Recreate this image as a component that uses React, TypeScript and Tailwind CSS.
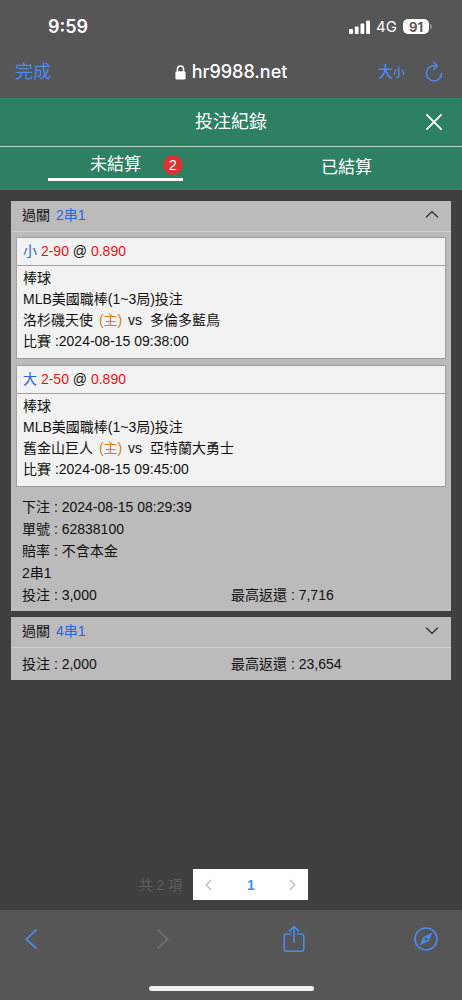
import React, { useState } from 'react';

interface Leg {
  pick: string;
  line: string;
  odds: string;
  home: string;
  away: string;
  time: string;
}

const legs: Leg[] = [
  { pick: '小', line: '2-90', odds: '0.890', home: '洛杉磯天使', away: '多倫多藍鳥', time: '2024-08-15 09:38:00' },
  { pick: '大', line: '2-50', odds: '0.890', home: '舊金山巨人', away: '亞特蘭大勇士', time: '2024-08-15 09:45:00' },
];

const Chevron: React.FC<{ up?: boolean }> = ({ up }) => (
  <svg className="h-4 w-4" viewBox="0 0 16 16" fill="none" stroke="#222" strokeWidth="1.3">
    <path d={up ? 'M2 10.4 8 4.6l6 5.8' : 'M2 4.6 8 10.4l6-5.8'} />
  </svg>
);

const StatusBar: React.FC = () => (
  <div className="flex h-[54px] items-center justify-between pl-12 pr-[30px]">
    <span className="text-lg font-semibold">9:59</span>
    <div className="flex items-center gap-[6px]">
      <svg className="h-[14px] w-[21px]" viewBox="0 0 21 14" fill="#fff">
        <rect x="0" y="9" width="4" height="5" rx="1" />
        <rect x="5.8" y="6.4" width="3.8" height="7.6" rx="1" />
        <rect x="11.5" y="3.4" width="3.8" height="10.6" rx="1" />
        <rect x="17.2" y="0.4" width="3.8" height="13.6" rx="1" />
      </svg>
      <span className="text-[15px]">4G</span>
      <div className="flex items-center gap-px">
        <span className="flex h-[15px] w-[26px] items-center justify-center rounded-[5px] bg-white text-[13px] font-bold text-[#565656]">91</span>
        <span className="h-[5px] w-[2px] rounded-r bg-[#8c8c8c]" />
      </div>
    </div>
  </div>
);

const BrowserBar: React.FC = () => (
  <div className="grid h-11 grid-cols-[1fr_auto_1fr] items-center px-[15px] pb-2">
    <button className="justify-self-start text-lg text-[#4b8af0]">完成</button>
    <div className="flex items-center gap-[6px]">
      <svg className="h-[15px] w-[11px]" viewBox="0 0 11 15">
        <rect x="0.4" y="6.2" width="10.2" height="8.3" rx="1.5" fill="#fff" />
        <path d="M2.4 7V4.2a3.1 3.1 0 0 1 6.2 0V7" fill="none" stroke="#fff" strokeWidth="1.5" />
      </svg>
      <span className="text-lg font-medium">hr9988.net</span>
    </div>
    <div className="flex items-center gap-5 justify-self-end pr-1">
      <button className="flex items-baseline font-medium leading-5 text-[#4b8af0]">
        <span className="text-[15px]">大</span>
        <span className="text-xs">小</span>
      </button>
      <button aria-label="Reload">
        <svg className="h-[22px] w-[18px]" viewBox="0 0 18 22" fill="none" stroke="#4b8af0" strokeWidth="1.6" strokeLinecap="round" strokeLinejoin="round">
          <path d="M16.6 12.4A7.6 7.6 0 1 1 9 4.8h2.8" />
          <path d="M8.8 1.2 12.4 4.8 8.8 8.4" />
        </svg>
      </button>
    </div>
  </div>
);

const LegCard: React.FC<{ leg: Leg }> = ({ leg }) => (
  <section className="border border-[#a0a0a0] bg-[#f2f2f2]">
    <h3 className="border-b border-[#a0a0a0] px-[6px] leading-[27px]">
      <span className="text-[#2563d9]">{leg.pick}</span> <span className="text-[#ee1111]">{leg.line}</span> @{' '}
      <span className="text-[#ee1111]">{leg.odds}</span>
    </h3>
    <div className="px-[6px] pb-[6px] pt-[2px] leading-[21px]">
      <p>棒球</p>
      <p>MLB美國職棒(1~3局)投注</p>
      <p>
        {leg.home} <span className="mx-[2px] text-[#e67817]">(主)</span> vs&nbsp; {leg.away}
      </p>
      <p>比賽 :{leg.time}</p>
    </div>
  </section>
);

const CardHeader: React.FC<{ label: string; open: boolean; onClick: () => void }> = ({ label, open, onClick }) => (
  <button
    onClick={onClick}
    className="flex h-[31px] w-full items-center justify-between border-b border-[#d0d0d0] px-[11px] pb-[2px] text-left"
  >
    <span className="flex gap-[6px]">
      <span>過關</span>
      <span className="text-[#2463eb]">{label}</span>
    </span>
    <Chevron up={open} />
  </button>
);

const Totals: React.FC<{ stake: string; payout: string }> = ({ stake, payout }) => (
  <div className="grid grid-cols-2">
    <p>投注 : {stake}</p>
    <p>最高返還 : {payout}</p>
  </div>
);

export const App: React.FC = () => {
  const [tab, setTab] = useState<'open' | 'settled'>('open');
  const [firstOpen, setFirstOpen] = useState<boolean>(true);
  const [secondOpen, setSecondOpen] = useState<boolean>(false);

  return (
    <div className="flex min-h-screen flex-col bg-[#404040] font-['Liberation_Sans','Noto_Sans_CJK_TC',sans-serif] text-sm text-[#111]">
      <header className="bg-[#565656] font-['Inter','Noto_Sans_CJK_TC',sans-serif] text-white">
        <StatusBar />
        <BrowserBar />
      </header>

      <div className="bg-[#2e8063] text-white">
        <div className="grid h-[49px] grid-cols-[1fr_auto_1fr] items-center border-b border-[#b9d6cb] px-5">
          <h1 className="col-start-2 text-lg">投注紀錄</h1>
          <button className="justify-self-end" aria-label="Close">
            <svg className="h-4 w-4" viewBox="0 0 16 16" stroke="#fff" strokeWidth="1.8">
              <path d="M0 0 16 16M16 0 0 16" />
            </svg>
          </button>
        </div>
        <nav className="grid h-[43px] grid-cols-2 text-[17px]">
          <button onClick={() => setTab('open')} className="flex items-start justify-center pt-1">
            <span
              className={`relative w-[135px] border-b-[3px] leading-[27px] ${
                tab === 'open' ? 'border-white' : 'border-transparent'
              }`}
            >
              未結算
              <span className="absolute right-0 top-1 h-5 w-5 rounded-full bg-[#d83434] text-center text-sm leading-5">2</span>
            </span>
          </button>
          <button onClick={() => setTab('settled')} className="flex items-center justify-center">
            已結算
          </button>
        </nav>
      </div>

      <main className="flex flex-1 flex-col gap-[6px] px-[11px] pb-[10px] pt-[11px]">
        <article className="bg-[#bbb]">
          <CardHeader label="2串1" open={firstOpen} onClick={() => setFirstOpen(!firstOpen)} />
          {firstOpen && (
            <div className="flex flex-col gap-[6px] px-[5px] pt-[5px]">
              {legs.map((leg) => (
                <LegCard key={leg.time} leg={leg} />
              ))}
            </div>
          )}
          <div className="px-[11px] pb-[5px] pt-[9px] leading-[22px]">
            <p>下注 : 2024-08-15 08:29:39</p>
            <p>單號 : 62838100</p>
            <p>賠率 : 不含本金</p>
            <p>2串1</p>
            <Totals stake="3,000" payout="7,716" />
          </div>
        </article>

        <article className="bg-[#bbb]">
          <CardHeader label="4串1" open={secondOpen} onClick={() => setSecondOpen(!secondOpen)} />
          <div className="px-[11px] py-[5px] leading-[22px]">
            <Totals stake="2,000" payout="23,654" />
          </div>
        </article>

        <div className="mt-auto flex items-center justify-center gap-[11px] pr-[15px]">
          <span className="text-[#5e5e5e]">共 2 項</span>
          <div className="flex h-[31px] w-[115px] items-center justify-between bg-white px-3">
            <button aria-label="Previous page">
              <svg className="h-3 w-[7px]" viewBox="0 0 7 12" fill="none" stroke="#bbb" strokeWidth="1.3">
                <path d="M6 1 1.2 6 6 11" />
              </svg>
            </button>
            <button className="font-bold text-[#4093f5]">1</button>
            <button aria-label="Next page">
              <svg className="h-3 w-[7px]" viewBox="0 0 7 12" fill="none" stroke="#bbb" strokeWidth="1.3">
                <path d="M1 1 5.8 6 1 11" />
              </svg>
            </button>
          </div>
        </div>
      </main>

      <footer className="flex h-[90px] flex-col items-center justify-between bg-[#565656] pb-[9px] pt-[15px]">
        <div className="flex w-full items-center justify-between pl-[19px] pr-6">
          <button aria-label="Back" className="flex w-6 justify-center">
            <svg className="h-5 w-3" viewBox="0 0 12 20" fill="none" stroke="#4b8af0" strokeWidth="1.8">
              <path d="M11.4 0.6 1.4 10.2 11.4 19.6" />
            </svg>
          </button>
          <button aria-label="Forward" disabled className="flex w-6 justify-center">
            <svg className="h-5 w-3" viewBox="0 0 12 20" fill="none" stroke="#6e6e6e" strokeWidth="1.8">
              <path d="M0.6 0.6 10.6 10.2 0.6 19.6" />
            </svg>
          </button>
          <button aria-label="Share" className="flex w-6 justify-center">
            <svg className="h-7 w-[22px]" viewBox="0 0 22 28" fill="none" stroke="#4b8af0" strokeWidth="1.6" strokeLinecap="round" strokeLinejoin="round">
              <path d="M7.4 9H3.6A2.4 2.4 0 0 0 1.2 11.4V23.8a2.4 2.4 0 0 0 2.4 2.4h14.8a2.4 2.4 0 0 0 2.4-2.4V11.4A2.4 2.4 0 0 0 18.4 9h-3.8" />
              <path d="M11 17.5V2M6.6 5.8 11 1.6l4.4 4.2" />
            </svg>
          </button>
          <button aria-label="Open in browser" className="flex w-6 justify-center">
            <svg className="h-6 w-6" viewBox="0 0 24 24">
              <circle cx="12" cy="12" r="11" fill="none" stroke="#4b8af0" strokeWidth="1.6" />
              <path fill="#4b8af0" fillRule="evenodd" d="M18.4 5.6 14.6 14 5.6 18.4 9.4 10ZM12 10.4a1.6 1.6 0 1 0 0 3.2 1.6 1.6 0 0 0 0-3.2Z" />
            </svg>
          </button>
        </div>
        <div className="h-[5px] w-[165px] rounded-full bg-[#f0f0f0]" />
      </footer>
    </div>
  );
};

export default App;
